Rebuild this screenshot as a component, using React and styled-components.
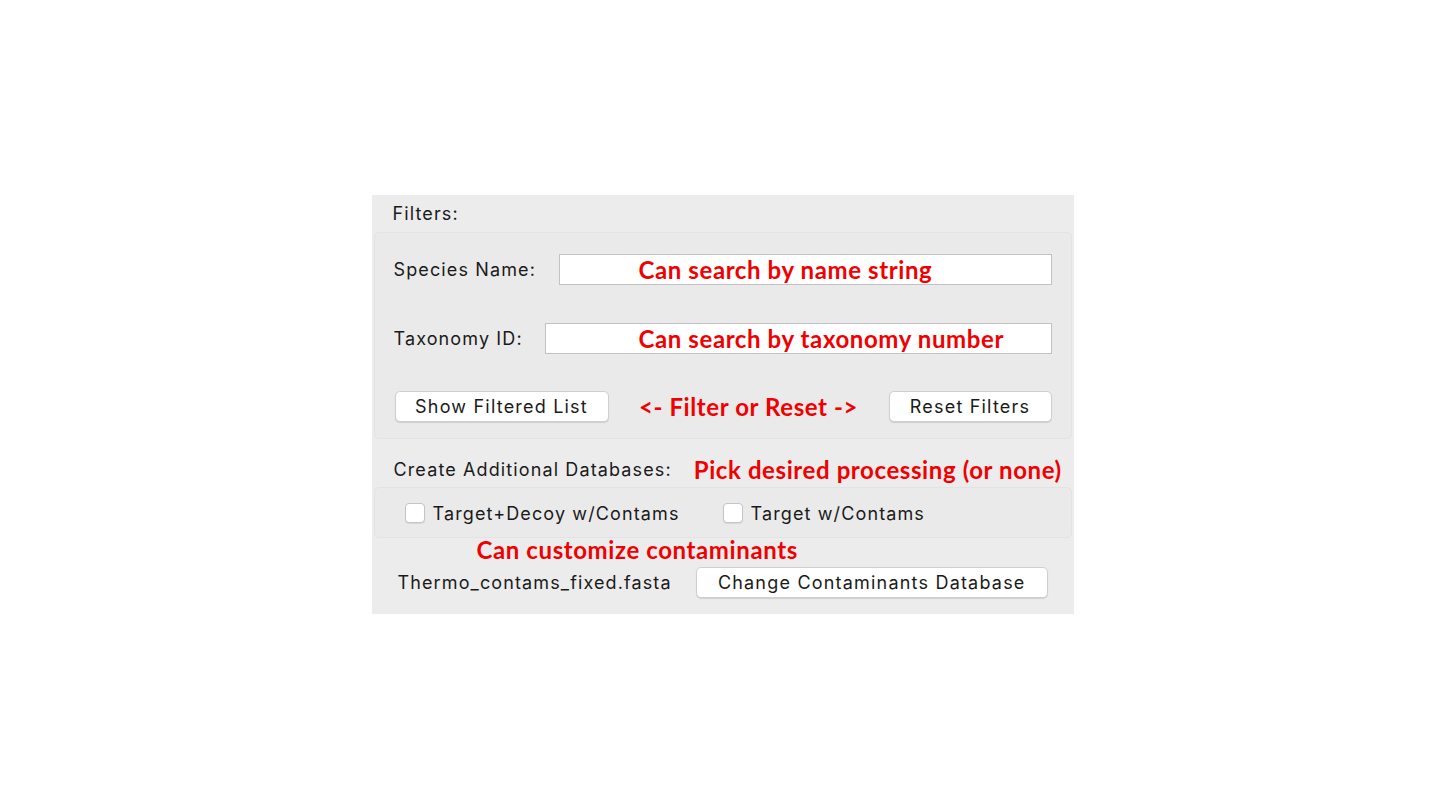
import React from "react";
import styled, { createGlobalStyle } from "styled-components";

const GlobalStyle = createGlobalStyle`
  body {
    margin: 0;
    background: #ffffff;
    font-family: Inter, "Liberation Sans", sans-serif;
  }
`;

const Page = styled.div`
  min-height: 100vh;
  display: flex;
  align-items: center;
  justify-content: center;
  padding-left: 5px;
  padding-bottom: 2px;
  box-sizing: border-box;
`;

const Panel = styled.div`
  width: 702px;
  height: 419px;
  background: #ececec;
  display: flex;
  flex-direction: column;
  color: #1a1a1a;
  font-size: 18px;
  letter-spacing: 1.12px;
`;

const Header = styled.div`
  height: 37px;
  box-sizing: border-box;
  display: flex;
  align-items: center;
  padding: 1px 0 0 21px;
`;

const Group = styled.div`
  margin: 0 2px;
  border: 1px solid #e3e3e3;
  border-radius: 5px;
  background: #eaeaea;
  height: ${(p) => p.h}px;
  box-sizing: border-box;
  display: flex;
  flex-direction: column;
`;

const FieldRow = styled.div`
  display: flex;
  align-items: center;
  height: 31px;
  margin-top: ${(p) => p.top}px;
  padding: 0 19px 0 19px;
`;

const Label = styled.span`
  width: ${(p) => p.w}px;
  flex-shrink: 0;
  white-space: nowrap;
`;

const InputBox = styled.div`
  flex: 1;
  height: 31px;
  box-sizing: border-box;
  background: #ffffff;
  border: 1px solid #c2c2c2;
  display: flex;
  align-items: center;
  padding-left: ${(p) => p.pad}px;
`;

const Note = styled.span`
  font-family: Lato, "Liberation Sans", sans-serif;
  font-weight: 700;
  font-size: 24px;
  color: #f00000;
  white-space: nowrap;
  letter-spacing: 0.6px;
`;

const Button = styled.button`
  height: 31px;
  width: ${(p) => p.w}px;
  background: #ffffff;
  border: 1px solid #cfcfcf;
  border-radius: 5px;
  box-shadow: 0 1px 1px rgba(0, 0, 0, 0.12);
  font-family: Inter, "Liberation Sans", sans-serif;
  font-size: 18px;
  letter-spacing: 1.2px;
  color: #1a1a1a;
  padding: 0;
`;

const ButtonRow = styled.div`
  display: flex;
  align-items: center;
  justify-content: space-between;
  margin-top: 37px;
  padding: 0 19px 0 20px;
  height: 31px;
`;

const CreateRow = styled.div`
  height: 48px;
  box-sizing: border-box;
  display: flex;
  align-items: center;
  padding: 13px 0 0 22px;
  gap: 22px;
`;

const CheckRow = styled.div`
  display: flex;
  align-items: center;
  height: 100%;
  box-sizing: border-box;
  padding: 2px 0 0 30px;
`;

const CheckItem = styled.label`
  display: flex;
  align-items: center;
  gap: 8px;
  margin-right: ${(p) => p.mr}px;
`;

const Box = styled.span`
  width: 20px;
  height: 20px;
  box-sizing: border-box;
  border: 1px solid #c4c4c4;
  border-radius: 4px;
  background: #ffffff;
  box-shadow: 0 1px 1px rgba(0, 0, 0, 0.08);
`;

const CustomRow = styled.div`
  height: 24px;
  display: flex;
  align-items: center;
  padding-left: 105px;
`;

const FileRow = styled.div`
  display: flex;
  align-items: center;
  gap: 24px;
  padding-left: 26px;
  margin-top: 5px;
  height: 31px;
`;

export default function App() {
  return (
    <>
      <GlobalStyle />
      <Page>
        <Panel>
          <Header>Filters:</Header>
          <Group h={207}>
            <FieldRow top={21}>
              <Label w={165}>Species Name:</Label>
              <InputBox pad={79}>
                <Note>Can search by name string</Note>
              </InputBox>
            </FieldRow>
            <FieldRow top={38}>
              <Label w={151}>Taxonomy ID:</Label>
              <InputBox pad={93}>
                <Note>Can search by taxonomy number</Note>
              </InputBox>
            </FieldRow>
            <ButtonRow>
              <Button w={214}>Show Filtered List</Button>
              <Note>&lt;- Filter or Reset -&gt;</Note>
              <Button w={163}>Reset Filters</Button>
            </ButtonRow>
          </Group>
          <CreateRow>
            <span>Create Additional Databases:</span>
            <Note>Pick desired processing (or none)</Note>
          </CreateRow>
          <Group h={51}>
            <CheckRow>
              <CheckItem mr={43}>
                <Box />
                Target+Decoy w/Contams
              </CheckItem>
              <CheckItem mr={0}>
                <Box />
                Target w/Contams
              </CheckItem>
            </CheckRow>
          </Group>
          <CustomRow>
            <Note>Can customize contaminants</Note>
          </CustomRow>
          <FileRow>
            <span>Thermo_contams_fixed.fasta</span>
            <Button w={352}>Change Contaminants Database</Button>
          </FileRow>
        </Panel>
      </Page>
    </>
  );
}
